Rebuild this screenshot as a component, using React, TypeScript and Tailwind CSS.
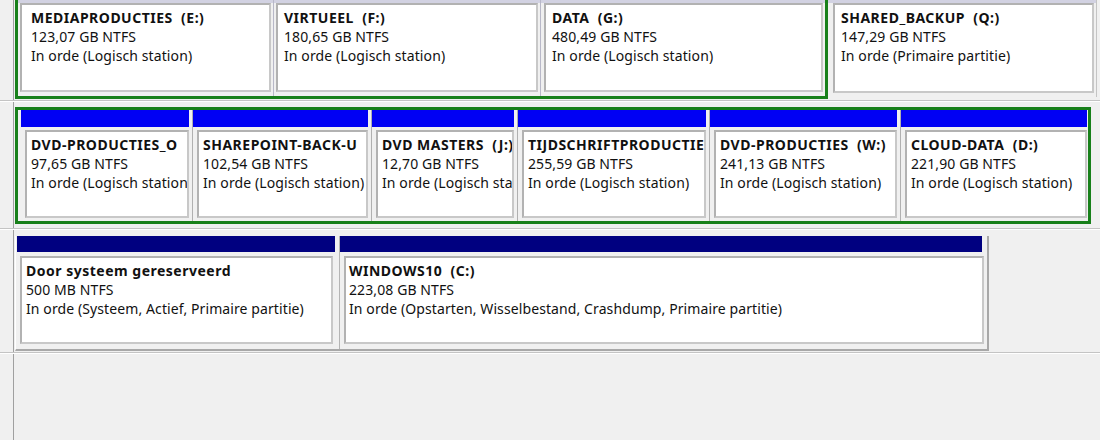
import React from "react";

type BoxProps = {
  title: string;
  size: string;
  status: string;
  cls: string;
};

function Box({ title, size, status, cls }: BoxProps) {
  return (
    <div
      className={`bg-white border-2 border-[#c8c8c8] border-t-[#b2b2b2] border-l-[#b2b2b2] pt-[3px] overflow-hidden whitespace-pre leading-[19px] text-[#111] tracking-[0.1px] ${cls}`}
    >
      <div className="font-bold tracking-[0.5px]">{title}</div>
      <div>{size}</div>
      <div>{status}</div>
    </div>
  );
}

function LeftCell() {
  return <div className="w-[14px] shrink-0 border-r border-[#a0a0a0] self-stretch" />;
}

function Sep() {
  return <div className="h-[2px] shrink-0 border-t border-[#c4c4c4] bg-white" />;
}

type Col2 = { w: string; title: string; size: string };

const row2: Col2[] = [
  { w: "w-[172px]", title: "DVD-PRODUCTIES_O", size: "97,65 GB NTFS" },
  { w: "w-[179px]", title: "SHAREPOINT-BACK-U", size: "102,54 GB NTFS" },
  { w: "w-[146px]", title: "DVD MASTERS  (J:)", size: "12,70 GB NTFS" },
  { w: "w-[192px]", title: "TIJDSCHRIFTPRODUCTIES  (T:)", size: "255,59 GB NTFS" },
  { w: "w-[191px]", title: "DVD-PRODUCTIES  (W:)", size: "241,13 GB NTFS" },
];

export default function App() {
  return (
    <div className="w-[1100px] h-[440px] bg-[#f0f0f0] overflow-hidden flex flex-col font-['Noto_Sans',sans-serif] text-[14px] text-black">
      {/* Disk row 1 (partially visible) */}
      <div className="flex h-[100px] shrink-0">
        <LeftCell />
        <div className="flex items-start">
          <div className="ml-[1px] w-[813px] h-[99px] border-[3px] border-t-0 border-[#18801a] flex">
            <div className="w-[256px] flex flex-col border-r border-[#b8b8c8]">
              <div className="h-[3px] bg-[#d2d2e2]" />
              <div className="pl-[2px] pr-[2px]">
                <Box
                  cls="h-[89px] pl-[9px]"
                  title="MEDIAPRODUCTIES  (E:)"
                  size="123,07 GB NTFS"
                  status="In orde (Logisch station)"
                />
              </div>
            </div>
            <div className="w-[267px] flex flex-col border-r border-[#b8b8c8]">
              <div className="h-[3px] bg-[#d2d2e2]" />
              <div className="pl-[2px] pr-[2px]">
                <Box
                  cls="h-[89px] pl-[6px]"
                  title="VIRTUEEL  (F:)"
                  size="180,65 GB NTFS"
                  status="In orde (Logisch station)"
                />
              </div>
            </div>
            <div className="flex-1 flex flex-col">
              <div className="h-[3px] bg-[#d2d2e2]" />
              <div className="pl-[3px] pr-[2px]">
                <Box
                  cls="h-[89px] pl-[6px]"
                  title="DATA  (G:)"
                  size="480,49 GB NTFS"
                  status="In orde (Logisch station)"
                />
              </div>
            </div>
          </div>
          <div className="w-[269px] flex flex-col border-r border-[#c4c4c4] h-[97px]">
            <div className="h-[3px] bg-[#d2d2e2]" />
            <div className="pl-[5px] pr-[2px]">
              <Box
                cls="h-[90px] pl-[6px]"
                title="SHARED_BACKUP  (Q:)"
                size="147,29 GB NTFS"
                status="In orde (Primaire partitie)"
              />
            </div>
          </div>
        </div>
      </div>
      <Sep />

      {/* Disk row 2: extended partition with logical drives */}
      <div className="flex h-[126px] shrink-0">
        <LeftCell />
        <div className="pt-[5px]">
          <div className="ml-[1px] w-[1076px] h-[117px] border-[3px] border-[#18801a] pl-[3px] flex">
            {row2.map((c) => (
              <div key={c.title} className={`${c.w} flex flex-col pr-[3px] border-r border-[#b0b0b0]`}>
                <div className="h-[17px] bg-[#0000f4]" />
                <Box
                  cls="mt-[3px] ml-[4px] h-[88px] pl-[4px]"
                  title={c.title}
                  size={c.size}
                  status="In orde (Logisch station)"
                />
              </div>
            ))}
            <div className="flex-1 flex flex-col pr-[1px]">
              <div className="h-[17px] bg-[#0000f4]" />
              <Box
                cls="mt-[3px] ml-[4px] h-[88px] pl-[4px]"
                title="CLOUD-DATA  (D:)"
                size="221,90 GB NTFS"
                status="In orde (Logisch station)"
              />
            </div>
          </div>
        </div>
      </div>
      <Sep />

      {/* Disk row 3: system disk */}
      <div className="flex h-[122px] shrink-0">
        <LeftCell />
        <div className="pt-[6px]">
          <div className="ml-[1px] w-[974px] h-[115px] border-l border-l-white border-r-2 border-b-2 border-r-[#a8a8a8] border-b-[#a8a8a8] pl-[1px] flex">
            <div className="w-[323px] flex flex-col pr-[4px] border-r border-[#b4b4b4]">
              <div className="h-[16px] bg-[#000080]" />
              <Box
                cls="mt-[4px] ml-[3px] mr-[2px] h-[88px] pl-[4px]"
                title="Door systeem gereserveerd"
                size="500 MB NTFS"
                status="In orde (Systeem, Actief, Primaire partitie)"
              />
            </div>
            <div className="flex-1 flex flex-col pr-[5px]">
              <div className="h-[16px] bg-[#000080]" />
              <Box
                cls="mt-[4px] ml-[4px] -mr-[2px] h-[88px] pl-[3px]"
                title="WINDOWS10  (C:)"
                size="223,08 GB NTFS"
                status="In orde (Opstarten, Wisselbestand, Crashdump, Primaire partitie)"
              />
            </div>
          </div>
        </div>
      </div>
      <Sep />

      <div className="flex flex-1">
        <LeftCell />
        <div className="flex-1" />
      </div>
    </div>
  );
}
